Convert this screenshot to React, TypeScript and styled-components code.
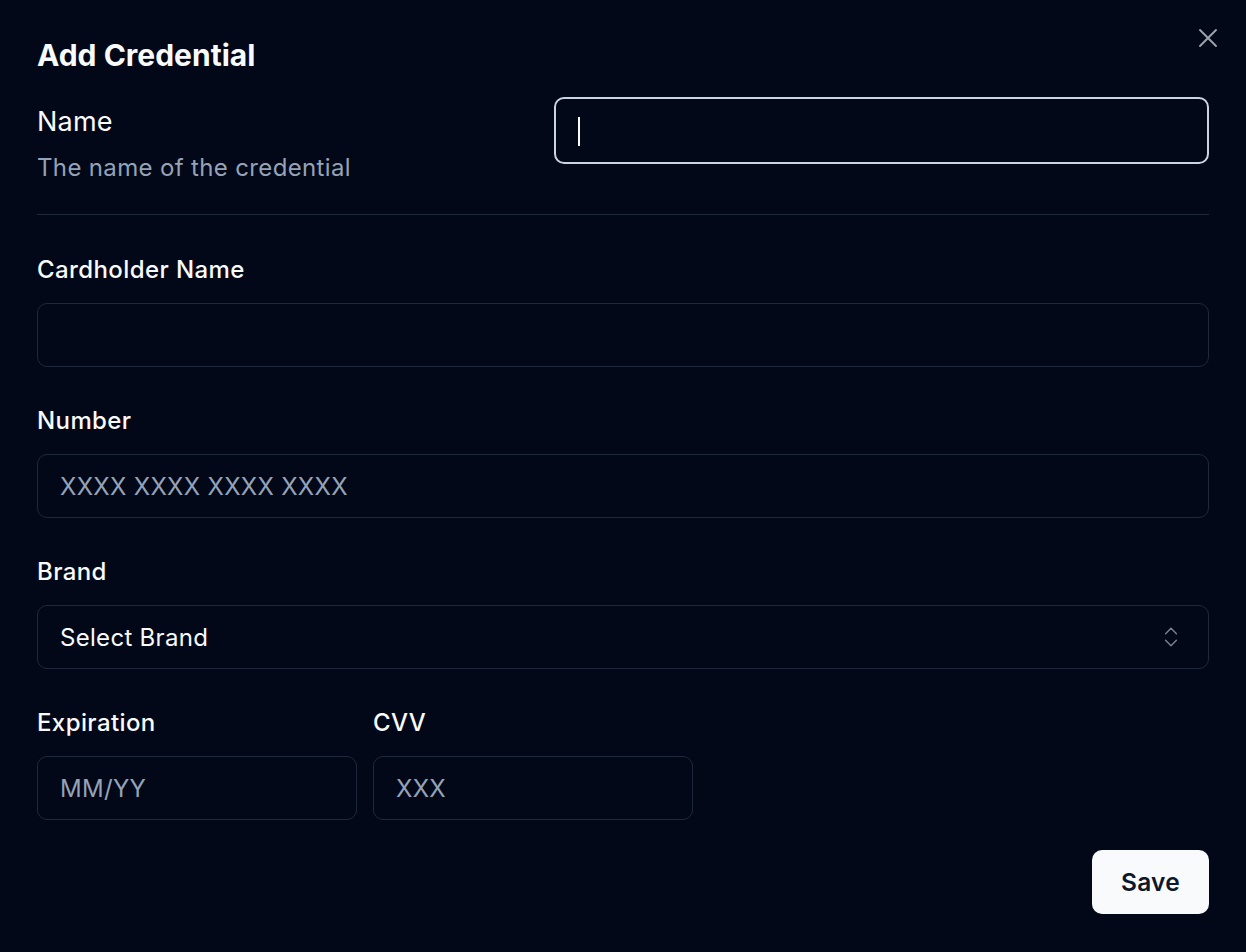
import React from "react";
import styled, { createGlobalStyle } from "styled-components";

const GlobalStyle = createGlobalStyle`
  html, body {
    margin: 0;
    padding: 0;
    background: #020817;
  }
  body {
    font-family: Inter, "Noto Sans", "Liberation Sans", sans-serif;
    color: #f8fafc;
    -webkit-font-smoothing: antialiased;
  }
  * {
    box-sizing: border-box;
  }
`;

const Dialog = styled.div`
  position: relative;
  width: 1246px;
  min-height: 952px;
  padding: 38px 37px 0 37px;
  display: flex;
  flex-direction: column;
  background: #020817;
`;

const Title = styled.h2`
  margin: 0;
  font-size: 30px;
  line-height: 34px;
  font-weight: 700;
  color: #f8fafc;
`;

const CloseButton = styled.button`
  position: absolute;
  top: 22px;
  right: 22px;
  width: 32px;
  height: 32px;
  padding: 0;
  border: none;
  background: transparent;
  color: #9ca3af;
  display: flex;
  align-items: center;
  justify-content: center;
  cursor: pointer;
`;

const NameRow = styled.div`
  margin-top: 25px;
  display: flex;
  align-items: flex-start;
  gap: 24px;
`;

const NameText = styled.div`
  flex: 1;
  padding-top: 6px;
  display: flex;
  flex-direction: column;
`;

const NameLabel = styled.label`
  font-size: 27px;
  line-height: 38px;
  font-weight: 400;
  letter-spacing: 0.2px;
  color: #f8fafc;
`;

const Description = styled.p`
  margin: 11px 0 0 0;
  font-size: 24px;
  line-height: 32px;
  letter-spacing: 0.35px;
  color: #94a3b8;
`;

const FocusWrap = styled.div`
  position: relative;
  width: 655px;
`;

const Caret = styled.span`
  position: absolute;
  left: 24px;
  top: 20px;
  width: 2px;
  height: 29px;
  background: #f8fafc;
`;

const Separator = styled.div`
  margin-top: 30px;
  height: 1px;
  background: #1e293b;
`;

const Field = styled.div<{ $top: number }>`
  display: flex;
  flex-direction: column;
  margin-top: ${(p) => p.$top}px;
`;

const Label = styled.label`
  padding-top: 2px;
  font-size: 24px;
  line-height: 32px;
  font-weight: 500;
  letter-spacing: 0.4px;
  color: #f8fafc;
  margin-bottom: 17px;
`;

const Input = styled.input<{ $focused?: boolean }>`
  width: 100%;
  height: ${(p) => (p.$focused ? "67px" : "64px")};
  padding: 0 22px;
  border-radius: 10px;
  border: ${(p) => (p.$focused ? "2px solid #cbd5e1" : "1.5px solid #1e293b")};
  background: #020817;
  color: #f8fafc;
  font-family: inherit;
  font-size: 24px;
  letter-spacing: 0.3px;
  outline: none;

  &::placeholder {
    color: #94a3b8;
  }
`;

const SelectBox = styled.button`
  width: 100%;
  height: 64px;
  padding: 0 22px;
  border-radius: 10px;
  border: 1.5px solid #1e293b;
  background: #020817;
  color: #f8fafc;
  font-family: inherit;
  font-size: 24px;
  letter-spacing: 0.3px;
  display: flex;
  align-items: center;
  justify-content: space-between;
  text-align: left;
`;

const ChevronBox = styled.span`
  display: flex;
  margin-right: 2px;
  color: #7c8290;
`;

const PairRow = styled.div`
  margin-top: 36px;
  display: grid;
  grid-template-columns: 320px 320px;
  gap: 16px;
`;

const PairField = styled.div`
  display: flex;
  flex-direction: column;
`;

const Footer = styled.div`
  margin-top: 30px;
  display: flex;
  justify-content: flex-end;
`;

const SaveButton = styled.button`
  width: 117px;
  height: 64px;
  border: none;
  border-radius: 10px;
  background: #f8fafc;
  color: #0f172a;
  font-family: inherit;
  font-size: 24.5px;
  font-weight: 600;
  letter-spacing: 0.2px;
  cursor: pointer;
`;

const App: React.FC = () => {
  return (
    <>
      <GlobalStyle />
      <Dialog>
        <Title>Add Credential</Title>
        <CloseButton aria-label="Close">
          <svg width="32" height="32" viewBox="0 0 24 24" fill="none" stroke="currentColor" strokeWidth="1.4" strokeLinecap="round" strokeLinejoin="round">
            <path d="M18 6 6 18" />
            <path d="m6 6 12 12" />
          </svg>
        </CloseButton>

        <NameRow>
          <NameText>
            <NameLabel htmlFor="cred-name">Name</NameLabel>
            <Description>The name of the credential</Description>
          </NameText>
          <FocusWrap>
            <Input id="cred-name" $focused />
            <Caret />
          </FocusWrap>
        </NameRow>

        <Separator />

        <Field $top={37}>
          <Label htmlFor="holder">Cardholder Name</Label>
          <Input id="holder" />
        </Field>

        <Field $top={36}>
          <Label htmlFor="number">Number</Label>
          <Input id="number" placeholder="XXXX XXXX XXXX XXXX" />
        </Field>

        <Field $top={36}>
          <Label>Brand</Label>
          <SelectBox type="button">
            <span>Select Brand</span>
            <ChevronBox>
              <svg width="26" height="26" viewBox="0 0 24 24" fill="none" stroke="currentColor" strokeWidth="1.3" strokeLinecap="round" strokeLinejoin="round">
                <path d="m7 15 5 5 5-5" />
                <path d="m7 9 5-5 5 5" />
              </svg>
            </ChevronBox>
          </SelectBox>
        </Field>

        <PairRow>
          <PairField>
            <Label htmlFor="exp">Expiration</Label>
            <Input id="exp" placeholder="MM/YY" />
          </PairField>
          <PairField>
            <Label htmlFor="cvv">CVV</Label>
            <Input id="cvv" placeholder="XXX" />
          </PairField>
        </PairRow>

        <Footer>
          <SaveButton type="button">Save</SaveButton>
        </Footer>
      </Dialog>
    </>
  );
};

export default App;
